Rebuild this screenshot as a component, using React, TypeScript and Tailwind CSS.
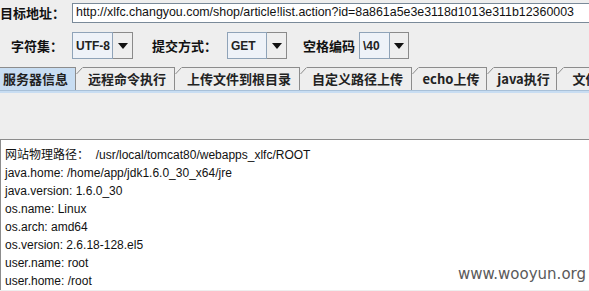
import React from "react";

const tabs = [
  { label: "服务器信息", width: 84, selected: true },
  { label: "远程命令执行", width: 99 },
  { label: "上传文件到根目录", width: 125 },
  { label: "自定义路径上传", width: 112 },
  { label: "echo上传", width: 75 },
  { label: "java执行", width: 70 },
  { label: "文件管理", width: 80 },
];

const info = [
  "网站物理路径：  /usr/local/tomcat80/webapps_xlfc/ROOT",
  "java.home: /home/app/jdk1.6.0_30_x64/jre",
  "java.version: 1.6.0_30",
  "os.name: Linux",
  "os.arch: amd64",
  "os.version: 2.6.18-128.el5",
  "user.name: root",
  "user.home: /root",
];

const cjk = { fontFamily: '"Noto Sans CJK SC", sans-serif' };
const sans = { fontFamily: '"Liberation Sans", "Noto Sans CJK SC", sans-serif' };

function Combo({ value, box, arrow }: { value: string; box: number; arrow: number }) {
  return (
    <div className="flex h-[27px] shrink-0">
      <div
        className="flex items-center border border-[#8fa3b8] bg-[#eef2f8] pl-[3px] text-[12px] font-bold whitespace-nowrap text-[#222]"
        style={{ width: box, fontFamily: '"Liberation Sans", sans-serif' }}
      >
        {value}
      </div>
      <div
        className="flex items-center justify-center border border-l-0 border-[#8a8a8a] bg-[#eeeeee]"
        style={{ width: arrow }}
      >
        <svg width="10" height="6" viewBox="0 0 10 6">
          <path d="M0 0H10L5 6Z" fill="#111" />
        </svg>
      </div>
    </div>
  );
}

export default function App() {
  return (
    <div className="relative h-[291px] w-[589px] overflow-hidden bg-[#eeeeee]">
      {/* address row */}
      <div className="flex h-[24px] items-center pt-[1px]">
        <span className="w-[72px] shrink-0 text-[13px] font-bold whitespace-nowrap text-[#111]" style={cjk}>
          目标地址：
        </span>
        <div
          className="flex h-[20px] w-[540px] shrink-0 items-center border border-[#7a8a99] bg-white pl-[3px] text-[12.4px] whitespace-nowrap text-[#111]"
          style={sans}
        >
          http://xlfc.changyou.com/shop/article!list.action?id=8a861a5e3e3118d1013e311b12360003
        </div>
      </div>

      {/* options row */}
      <div className="mt-[8px] flex h-[27px] items-center">
        <span className="ml-[11px] w-[61px] shrink-0 text-[13px] font-bold whitespace-nowrap text-[#111]" style={cjk}>
          字符集：
        </span>
        <Combo value="UTF-8" box={41} arrow={20} />
        <span className="ml-[19px] w-[75px] shrink-0 text-[13px] font-bold whitespace-nowrap text-[#111]" style={cjk}>
          提交方式：
        </span>
        <Combo value="GET" box={40} arrow={20} />
        <span className="ml-[16px] w-[56px] shrink-0 text-[13px] font-bold whitespace-nowrap text-[#111]" style={cjk}>
          空格编码
        </span>
        <Combo value="\40" box={31} arrow={19} />
      </div>

      {/* tabs */}
      <div className="mt-[8px] ml-[-8px] flex h-[23px]">
        {tabs.map((t) => (
          <div
            key={t.label}
            className={`relative flex shrink-0 items-center justify-center border-t border-r border-[#8c8c8c] text-[13px] font-bold whitespace-nowrap text-[#222] ${
              t.selected ? "bg-[#c8ddf2]" : "bg-[#eeeeee]"
            }`}
            style={{ width: t.width, ...cjk }}
          >
            {!t.selected && (
              <svg className="absolute left-0 top-[-1px]" width="7" height="7" viewBox="0 0 7 7">
                <path d="M0 0H7V1L1 7H0Z" fill="#eeeeee" />
                <path d="M0.5 7L6.5 0.5" stroke="#8c8c8c" strokeWidth="1" fill="none" />
              </svg>
            )}
            <span className="pl-[4px]">{t.label}</span>
          </div>
        ))}
      </div>
      <div className="h-[3px] border-t border-[#a8c0d8] bg-[#c8ddf2]" />

      {/* empty panel area */}
      <div className="h-[46px]" />

      {/* text area */}
      <div
        className="border-t border-l border-[#8c8c8c] bg-white pt-[6px] pl-[4px] text-[12px] leading-[18px] text-[#111]"
        style={sans}
      >
        {info.map((line) => (
          <div key={line} className="whitespace-pre">
            {line}
          </div>
        ))}
      </div>

      {/* watermark */}
      <div
        className="absolute right-[3px] bottom-[6px] text-[15px] text-[#5a5a5a]"
        style={{ fontFamily: '"DejaVu Sans", sans-serif' }}
      >
        www.wooyun.org
      </div>
    </div>
  );
}
